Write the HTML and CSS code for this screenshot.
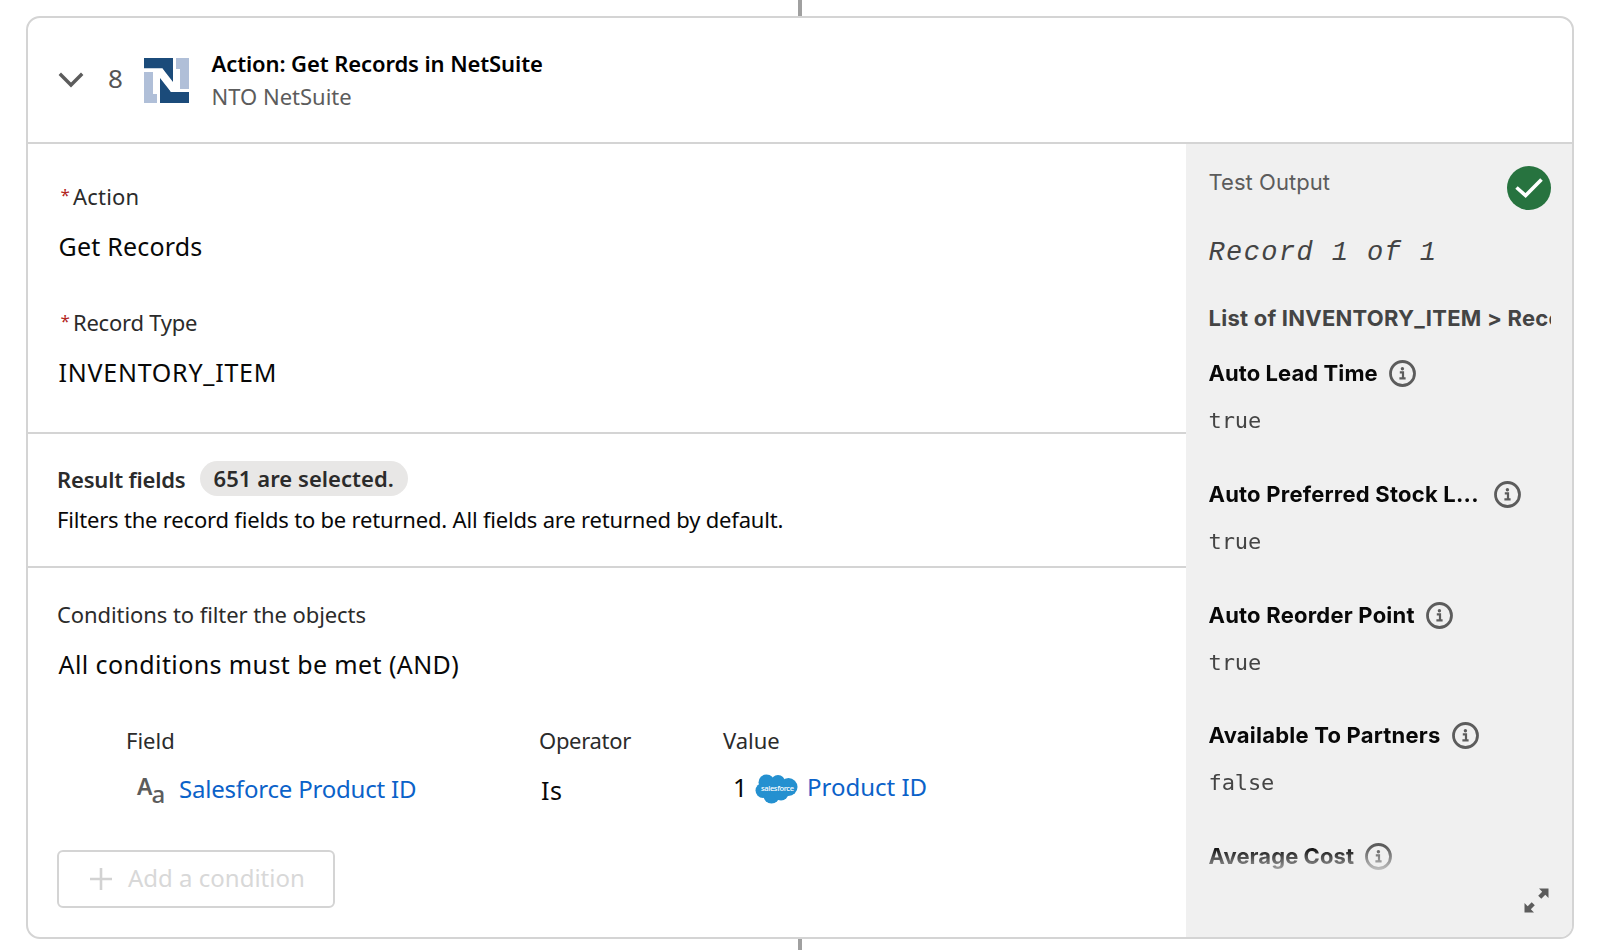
FILE: index.html
```html
<!DOCTYPE html>
<html lang="en">
<head>
    <meta charset="UTF-8">
    <meta name="viewport" content="width=device-width, initial-scale=1.0">
    <title>Action: Get Records in NetSuite</title>
    <link rel="stylesheet" href="styles.css">
</head>
<body>
    <!-- icon reused by every output field -->
    <svg class="defs" width="0" height="0">
        <symbol id="info" viewBox="0 0 27 27">
            <circle cx="13.5" cy="13.5" r="12" fill="none" stroke="#5c5c5c" stroke-width="2.8"/>
            <circle cx="13.4" cy="8.7" r="1.7" fill="#5c5c5c"/>
            <path d="M10.8 12.4h3.2v5.6M10.4 18.4h6.2" fill="none" stroke="#5c5c5c" stroke-width="2.2"/>
        </symbol>
    </svg>

    <div class="connector top"></div>
    <div class="card">
        <div class="card-header">
            <svg class="chevron" width="26" height="16" viewBox="0 0 26 16">
                <path d="M1.8 1.8L13 13L24.2 1.8" fill="none" stroke="#5c5c5c" stroke-width="3.4"/>
            </svg>
            <span class="step">8</span>
            <svg class="logo" width="45" height="45" viewBox="0 0 45 45">
                <path d="M0 0H29V31L18.500 10.500H0Z" fill="#1b4b7a"/>
                <path d="M32 0H45V31H36V11H32Z" fill="#b0bfd8"/>
                <path d="M0 14H9V36H13V45H0Z" fill="#b0bfd8"/>
                <path d="M16 45V14L27 34H45V45Z" fill="#1b4b7a"/>
                <path d="M0 10.500H18.500L29 24V11H36V31H45V34H27L16 20V36H9V14H0Z" fill="#fff"/>
            </svg>
            <div>
                <div class="title">Action: Get Records in NetSuite</div>
                <div class="subtitle">NTO NetSuite</div>
            </div>
        </div>

        <div class="card-body">
            <div class="main">
                <div class="section fields">
                    <div class="label"><span class="req">*</span>Action</div>
                    <div class="value">Get Records</div>
                    <div class="label second"><span class="req">*</span>Record Type</div>
                    <div class="value caps">INVENTORY_ITEM</div>
                </div>

                <div class="section result">
                    <div class="result-row">
                        <span class="result-name">Result fields</span>
                        <span class="badge">651 are selected.</span>
                    </div>
                    <div class="help">Filters the record fields to be returned. All fields are returned by default.</div>
                </div>

                <div class="section conditions">
                    <div class="cond-label">Conditions to filter the objects</div>
                    <div class="cond-value">All conditions must be met (AND)</div>
                    <div class="cond-grid">
                        <div>
                            <div class="col-label">Field</div>
                            <div class="field-value">
                                <span class="text-icon"><b>A</b><i>a</i></span>
                                <a class="link tight">Salesforce Product ID</a>
                            </div>
                        </div>
                        <div>
                            <div class="col-label op">Operator</div>
                            <div class="is">Is</div>
                        </div>
                        <div>
                            <div class="col-label">Value</div>
                            <div class="value-ref">
                                <span class="num">1</span>
                                <svg width="43" height="30" viewBox="0 0 43 30">
                                    <g fill="#2490d0">
                                        <circle cx="11.500" cy="8.500" r="8"/>
                                        <circle cx="23" cy="8" r="7"/>
                                        <circle cx="33.500" cy="13" r="9"/>
                                        <circle cx="8" cy="16.500" r="7.500"/>
                                        <circle cx="16.500" cy="21.500" r="8"/>
                                        <circle cx="26" cy="19" r="7.500"/>
                                        <rect x="8" y="8" width="24" height="13"/>
                                    </g>
                                    <text class="sf" x="6" y="16.500" textLength="33" fill="#fff">salesforce</text>
                                </svg>
                                <a class="link">Product ID</a>
                            </div>
                        </div>
                    </div>
                    <button class="add" disabled>
                        <svg width="22" height="22" viewBox="0 0 22 22">
                            <path d="M11 0V22M0 11H22" stroke="#d2d2d2" stroke-width="2.6"/>
                        </svg>
                        <span>Add a condition</span>
                    </button>
                </div>
            </div>

            <div class="output">
                <div class="output-head">
                    <span class="output-title">Test Output</span>
                    <svg width="44" height="44" viewBox="0 0 44 44">
                        <circle cx="22" cy="22" r="22" fill="#27733f"/>
                        <path d="M9.500 21.500L18.600 29.600L34.500 13.500" fill="none" stroke="#fff" stroke-width="3.600"/>
                    </svg>
                </div>
                <div class="record">Record 1 of 1</div>
                <div class="list-of">List of INVENTORY_ITEM &gt; Record</div>
                <div class="scroll">
                    <div class="item">
                        <div class="name"><span class="n1">Auto Lead Time</span><svg class="info"><use href="#info"/></svg></div>
                        <div class="val">true</div>
                    </div>
                    <div class="item">
                        <div class="name"><span class="n2">Auto Preferred Stock L...</span><svg class="info"><use href="#info"/></svg></div>
                        <div class="val">true</div>
                    </div>
                    <div class="item">
                        <div class="name"><span>Auto Reorder Point</span><svg class="info"><use href="#info"/></svg></div>
                        <div class="val">true</div>
                    </div>
                    <div class="item">
                        <div class="name"><span>Available To Partners</span><svg class="info"><use href="#info"/></svg></div>
                        <div class="val">false</div>
                    </div>
                    <div class="item">
                        <div class="name"><span class="n1">Average Cost</span><svg class="info"><use href="#info"/></svg></div>
                    </div>
                </div>
                <svg class="expand" width="25" height="25" viewBox="0 0 25 25" fill="#5c5c5c">
                    <path d="M15 0.500H24.500V10L21.300 6.800L17.300 10.800L14.200 7.700L18.200 3.700Z"/>
                    <path d="M10 24.500H0.500V15L3.700 18.200L7.700 14.200L10.800 17.300L6.800 21.300Z"/>
                </svg>
            </div>
        </div>
    </div>
    <div class="connector bottom"></div>
</body>
</html>
```
FILE: styles.css
```css
* {
    box-sizing: border-box;
}
body {
    margin: 0;
    width: 1600px;
    height: 950px;
    overflow: hidden;
    background-color: #fff;
    color: #080808;
    font-family: "Noto Sans", sans-serif;
    font-size: 22px;
    line-height: 32px;
}
svg {
    display: block;
    flex: none;
}
.defs {
    position: absolute;
}
.connector {
    width: 4px;
    margin: 0 auto;
    background-color: #a0a0a0;
}
.connector.top {
    height: 16px;
}
.connector.bottom {
    height: 11px;
}

/* card */
.card {
    width: 1548px;
    height: 923px;
    margin: 0 auto;
    border: 2px solid #d4d4d4;
    border-radius: 14px;
    overflow: hidden;
}
.card-header {
    display: flex;
    align-items: center;
    height: 126px;
    padding: 0 0 0 30px;
    border-bottom: 2px solid #d4d4d4;
}
.chevron {
    margin-right: 24px;
}
.step {
    width: 36px;
    padding-bottom: 5px;
    font-size: 26px;
    color: #555;
}
.logo {
    margin-right: 22.5px;
}
.title,
.subtitle {
    line-height: 33px;
}
.title {
    font-weight: 600;
    letter-spacing: -0.1px;
    color: #000;
}
.subtitle {
    margin-bottom: 1px;
    letter-spacing: 0;
    color: #5c5c5c;
}
.card-body {
    display: flex;
    height: 793px;
}
.main {
    flex: 1;
}
.section {
    border-bottom: 2px solid #d4d4d4;
}

/* action + record type */
.fields {
    height: 290px;
    padding: 36px 0 0 30.5px;
}
.label {
    display: flex;
    letter-spacing: 0.2px;
    color: #2b2b2b;
}
.label.second {
    margin-top: 44px;
    letter-spacing: -0.24px;
}
.req {
    width: 14.5px;
    padding-left: 2px;
    font-size: 17px;
    line-height: 29px;
    color: #b3261e;
}
.value {
    margin-top: 18px;
    font-size: 25px;
    letter-spacing: 0.2px;
}
.value.caps {
    letter-spacing: 0.76px;
}

/* result fields */
.result {
    height: 134px;
    padding: 27px 0 0 29px;
}
.result-row {
    display: flex;
    align-items: center;
    gap: 14px;
    height: 35px;
    font-weight: 600;
    color: #2b2b2b;
}
.result-name {
    letter-spacing: -0.18px;
}
.badge {
    height: 35px;
    padding: 1px 14px 0;
    border-radius: 18px;
    background-color: #e8e7e6;
    letter-spacing: 0.05px;
}
.help {
    margin-top: 7px;
    letter-spacing: -0.19px;
}

/* conditions */
.conditions {
    padding: 30px 0 0 29px;
    border: 0;
}
.cond-label {
    letter-spacing: -0.08px;
    color: #2b2b2b;
}
.cond-value {
    margin-top: 18px;
    padding-left: 1.5px;
    font-size: 25px;
    letter-spacing: 0.4px;
}
.cond-grid {
    display: grid;
    grid-template-columns: 413px 184px 1fr;
    height: 82px;
    margin-top: 44px;
    padding-left: 69px;
}
.col-label {
    color: #2b2b2b;
}
.col-label.op {
    letter-spacing: -0.3px;
}
.field-value {
    display: flex;
    margin-top: 17px;
    padding-left: 11px;
}
.text-icon {
    display: flex;
    width: 42px;
    color: #5c5c5c;
}
.text-icon b {
    font-size: 23px;
    font-weight: 600;
    line-height: 26px;
}
.text-icon i {
    margin-left: -1px;
    font-size: 24px;
    font-style: normal;
    font-weight: 500;
    line-height: 42px;
}
.link {
    font-size: 24px;
    color: #0b62c9;
}
.link.tight {
    letter-spacing: -0.2px;
}
.is {
    margin-top: 18px;
    padding-left: 2px;
    font-size: 25px;
    letter-spacing: 0.5px;
}
.value-ref {
    display: flex;
    margin-top: 15px;
    padding-left: 10px;
}
.num {
    width: 22px;
    font-size: 25px;
}
.value-ref svg {
    margin: 3px 9px 0 0;
}
.sf {
    font: 500 7.5px "Noto Sans", sans-serif;
}
.add {
    display: flex;
    align-items: center;
    gap: 16px;
    width: 278px;
    height: 58px;
    margin-top: 44px;
    padding: 0 0 0 31px;
    border: 2px solid #d4d4d4;
    border-radius: 6px;
    background-color: #fff;
    color: #d8d8d8;
    font: 24px "Noto Sans", sans-serif;
}
.add span {
    margin-top: -4px;
}

/* test output */
.output {
    width: 386px;
    padding: 22px 21.5px 0 22.5px;
    background-color: #f0f0f0;
    font-family: Inter, sans-serif;
}
.output-head {
    display: flex;
    justify-content: space-between;
    height: 71px;
}
.output-title {
    letter-spacing: 0.05px;
    color: #5c5c5c;
}
.record {
    font: italic 27px/32px "Liberation Mono", monospace;
    letter-spacing: 1.4px;
    color: #444;
}
.list-of {
    margin-top: 33px;
    overflow: hidden;
    font-weight: 700;
    letter-spacing: 0.24px;
    white-space: nowrap;
    color: #444;
}
.scroll {
    height: 543px;
    margin-top: 23px;
    overflow: hidden;
    -webkit-mask-image: linear-gradient(#000 490px, transparent 524px);
    mask-image: linear-gradient(#000 490px, transparent 524px);
}
.item {
    height: 120.8px;
}
.name {
    display: flex;
    align-items: center;
    gap: 11px;
    font-weight: 700;
    letter-spacing: 0.22px;
    color: #080808;
}
.n1 {
    letter-spacing: 0.08px;
}
.n2 {
    margin-right: 4px;
}
.info {
    width: 27px;
    height: 27px;
    margin-top: 1px;
}
.val {
    margin-top: 16px;
    font-family: "DejaVu Sans Mono", monospace;
    letter-spacing: -0.1px;
    color: #444;
}
.expand {
    margin: -12px 2px 0 auto;
}
```
